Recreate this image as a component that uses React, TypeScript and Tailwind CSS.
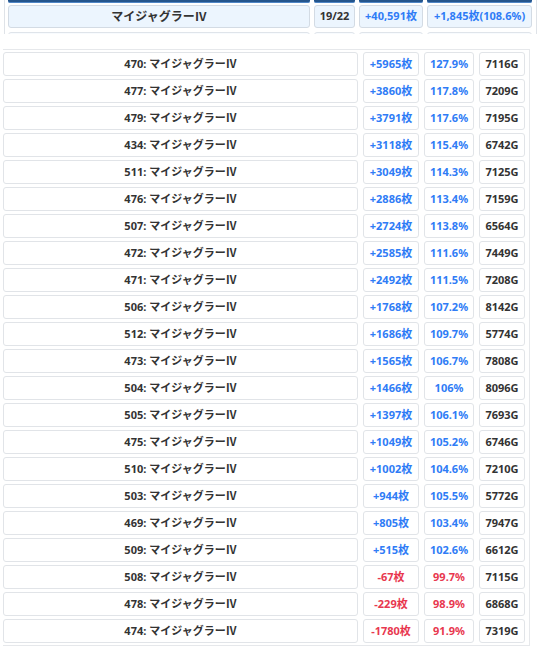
import React from "react";

const rows: [string, string, string, string][] = [
  ["470", "+5965", "127.9%", "7116G"],
  ["477", "+3860", "117.8%", "7209G"],
  ["479", "+3791", "117.6%", "7195G"],
  ["434", "+3118", "115.4%", "6742G"],
  ["511", "+3049", "114.3%", "7125G"],
  ["476", "+2886", "113.4%", "7159G"],
  ["507", "+2724", "113.8%", "6564G"],
  ["472", "+2585", "111.6%", "7449G"],
  ["471", "+2492", "111.5%", "7208G"],
  ["506", "+1768", "107.2%", "8142G"],
  ["512", "+1686", "109.7%", "5774G"],
  ["473", "+1565", "106.7%", "7808G"],
  ["504", "+1466", "106%", "8096G"],
  ["505", "+1397", "106.1%", "7693G"],
  ["475", "+1049", "105.2%", "6746G"],
  ["510", "+1002", "104.6%", "7210G"],
  ["503", "+944", "105.5%", "5772G"],
  ["469", "+805", "103.4%", "7947G"],
  ["509", "+515", "102.6%", "6612G"],
  ["508", "-67", "99.7%", "7115G"],
  ["478", "-229", "98.9%", "6868G"],
  ["474", "-1780", "91.9%", "7319G"],
];

const font = { fontFamily: '"Noto Sans", "Noto Sans CJK JP", sans-serif' };

export default function App() {
  return (
    <div className="w-[542px] h-[670px] bg-white text-[#333] font-bold" style={font}>
      {/* top summary block */}
      <div className="ml-[4px] w-[533px] h-[34px] overflow-hidden border-l border-r border-[#dfe3e8] pl-[3px] flex flex-col">
        <div className="flex gap-[4px] h-[3px] shrink-0">
          <div className="w-[302px] bg-[#24558c] border-b border-[#4f86c6] rounded-b-[2px]" />
          <div className="w-[41px] bg-[#24558c] border-b border-[#4f86c6] rounded-b-[2px]" />
          <div className="w-[64px] bg-[#24558c] border-b border-[#4f86c6] rounded-b-[2px]" />
          <div className="w-[105px] bg-[#24558c] border-b border-[#4f86c6] rounded-b-[2px]" />
        </div>
        <div className="flex gap-[4px] h-[23px] mt-[2px] shrink-0 text-[11px]">
          <div className="w-[302px] flex items-center justify-center rounded-[3px] border border-[#d3dbe4] bg-[#ecf5fe] text-[12px]">マイジャグラーⅣ</div>
          <div className="w-[41px] flex items-center justify-center rounded-[3px] border border-[#d3dbe4] bg-[#ecf5fe]">19/22</div>
          <div className="w-[64px] flex items-center justify-center rounded-[3px] border border-[#d3dbe4] bg-[#ecf5fe] text-[#2f7cf6]">+40,591枚</div>
          <div className="w-[105px] flex items-center justify-center rounded-[3px] border border-[#d3dbe4] bg-[#ecf5fe] text-[#2f7cf6]">+1,845枚(108.6%)</div>
        </div>
        <div className="flex gap-[4px] h-[23px] mt-[4px] shrink-0">
          <div className="w-[302px] rounded-[3px] border border-[#dfe4ea] bg-[#f8fbfe]" />
          <div className="w-[41px] rounded-[3px] border border-[#dfe4ea] bg-[#f8fbfe]" />
          <div className="w-[64px] rounded-[3px] border border-[#dfe4ea] bg-[#f8fbfe]" />
          <div className="w-[105px] rounded-[3px] border border-[#dfe4ea] bg-[#f8fbfe]" />
        </div>
      </div>

      {/* list block */}
      <div className="mt-[15px] ml-[3px] w-[527px] border-t border-r border-b border-[#e6e8eb] pt-[2px] pb-[2px] flex flex-col gap-[3px] text-[11px]">
        {rows.map(([no, diff, rate, games]) => {
          const neg = diff.startsWith("-");
          const col = neg ? "text-[#e8384f]" : "text-[#2f7cf6]";
          return (
            <div key={no} className="flex gap-[5px] h-[24px]">
              <div className="w-[355px] flex items-center justify-center rounded-[3px] border border-[#e1e4e8]">
                {no}: マイジャグラーⅣ
              </div>
              <div className={`w-[56px] flex items-center justify-center rounded-[3px] border border-[#e1e4e8] ${col}`}>
                {diff}枚
              </div>
              <div className={`w-[50px] flex items-center justify-center rounded-[3px] border border-[#e1e4e8] ${col}`}>
                {rate}
              </div>
              <div className="w-[46px] flex items-center justify-center rounded-[3px] border border-[#e1e4e8]">
                {games}
              </div>
            </div>
          );
        })}
      </div>
    </div>
  );
}
